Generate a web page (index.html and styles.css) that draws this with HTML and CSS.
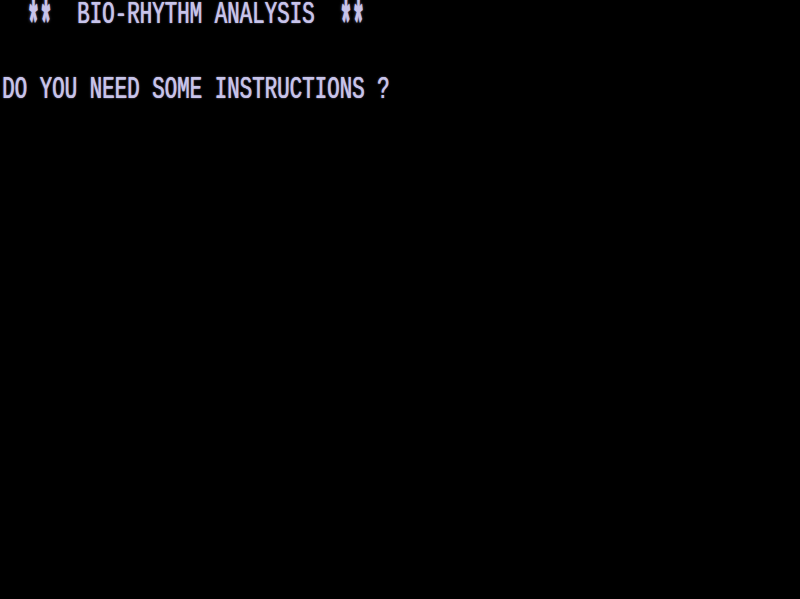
FILE: index.html
```html
<!DOCTYPE html>
<html>
<head>
<meta charset="utf-8">
<link rel="stylesheet" href="styles.css">
</head>
<body>
<div class="screen">
  <div class="row"><span class="txt">  <span class="star">**</span>  BIO-RHYTHM ANALYSIS  <span class="star">**</span></span></div>
  <div class="row"></div>
  <div class="row"><span class="txt">DO YOU NEED SOME INSTRUCTIONS ?</span></div>
</div>
</body>
</html>
```
FILE: styles.css
```css
html, body {
  margin: 0;
  padding: 0;
  background: #000;
}
.screen {
  width: 800px;
  height: 599px;
  background: #000;
  overflow: hidden;
  padding-left: 2px;
  padding-top: 1px;
  box-sizing: border-box;
}
.row {
  height: 37.5px;
  white-space: pre;
}
.txt {
  display: inline-block;
  font-family: "Liberation Mono", monospace;
  font-weight: normal;
  font-size: 20.83px;
  line-height: 0.86;
  color: #c8c4ea;
  transform: scaleY(1.54);
  transform-origin: 0 0;
  text-shadow: 0.6px 0 0 rgba(200, 196, 234, 0.85), 0 0 1.5px rgba(190, 186, 230, 0.7);
  white-space: pre;
}
.star {
  display: inline-block;
  font-weight: bold;
  transform: scaleY(2.1);
  transform-origin: 50% 0;
}
```
